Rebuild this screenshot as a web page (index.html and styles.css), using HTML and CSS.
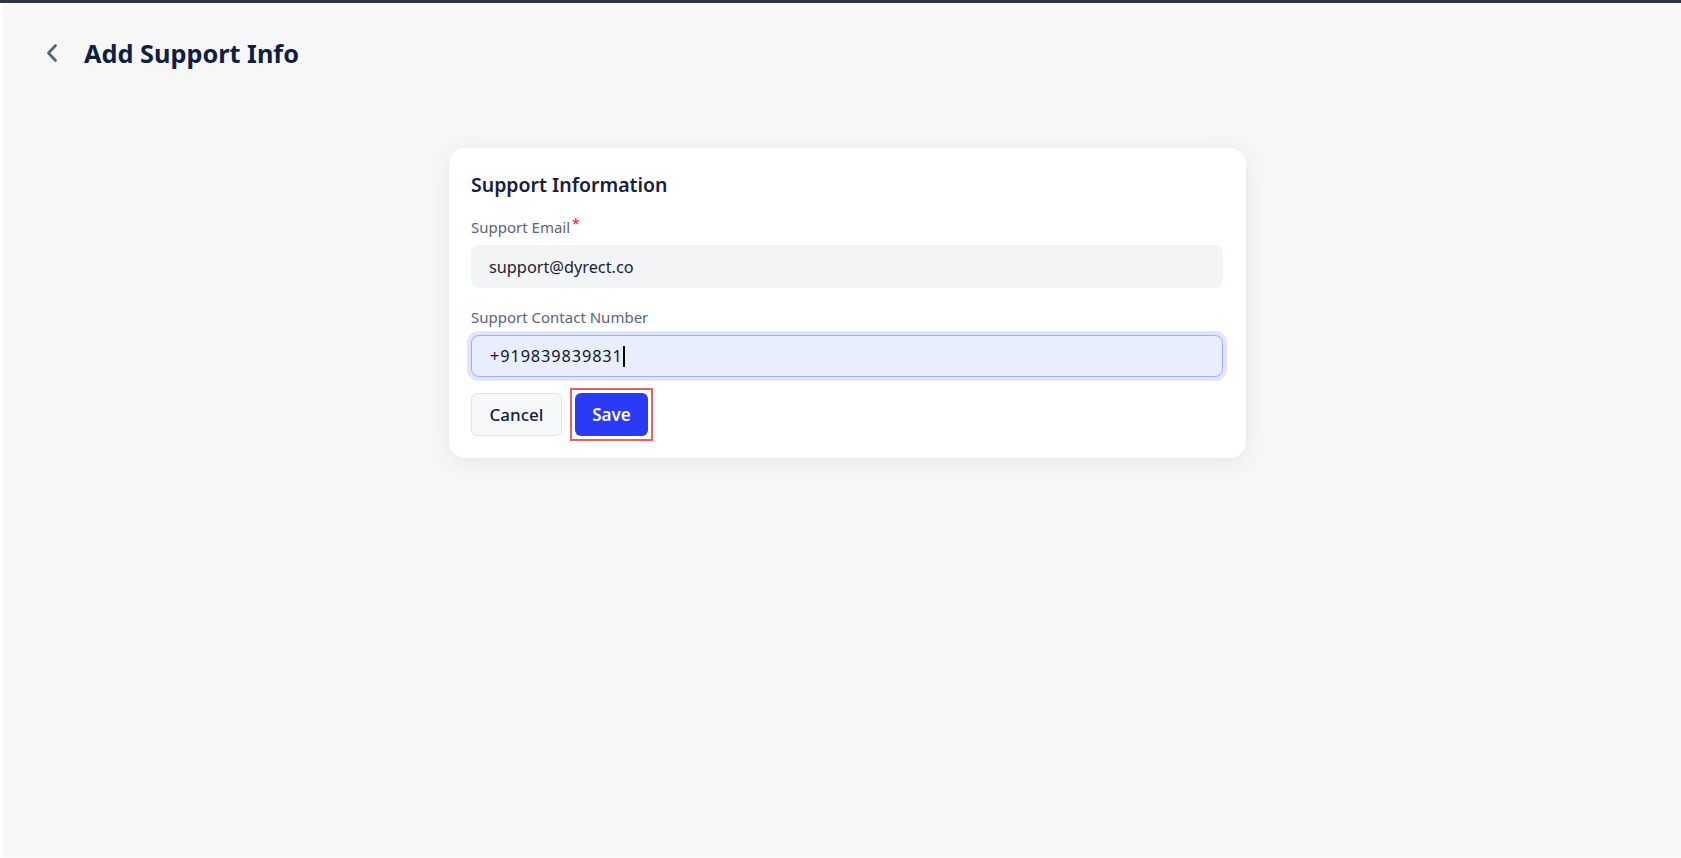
FILE: index.html
```html
<!DOCTYPE html>
<html lang="en">
<head>
<meta charset="utf-8">
<title>Add Support Info</title>
<link rel="stylesheet" href="styles.css">
</head>
<body>
<div class="topbar"></div>
<main class="page">
  <header class="page-header">
    <button class="back" type="button" aria-label="Back">
      <svg width="12" height="20" viewBox="0 0 12 20" fill="none"><path d="M9.5 2.5 L2.5 10 L9.5 17.5" stroke="#5b6579" stroke-width="2.8" stroke-linecap="round" stroke-linejoin="round"/></svg>
    </button>
    <h1 class="title">Add Support Info</h1>
  </header>
  <section class="card-wrap">
    <form class="card">
      <h2 class="card-title">Support Information</h2>
      <label class="label">Support Email<span class="req">*</span></label>
      <div class="input input-plain">support@dyrect.co</div>
      <label class="label label-2">Support Contact Number</label>
      <div class="input input-focus"><span class="phone">+919839839831</span><span class="caret"></span></div>
      <div class="actions">
        <button type="button" class="btn btn-cancel">Cancel</button>
        <button type="button" class="btn btn-save">Save</button>
      </div>
    </form>
  </section>
</main>
</body>
</html>
```

FILE: styles.css
```css
* { box-sizing: border-box; }
html, body { margin: 0; padding: 0; }
body {
  background: #ffffff;
  font-family: "Noto Sans", "Open Sans", sans-serif;
  width: 1681px;
  height: 858px;
  overflow: hidden;
}
.topbar {
  height: 3px;
  background: #2e3441;
}
.page {
  margin-left: 3px;
  height: 854px;
  background: #f7f7f7;
}
.page-header {
  display: flex;
  align-items: center;
  padding: 34px 0 0 39px;
  gap: 22px;
}
.back {
  border: 0;
  background: none;
  padding: 0;
  width: 20px;
  height: 24px;
  display: flex;
  align-items: center;
  justify-content: center;
}
.title {
  margin: 0;
  font-size: 25.3px;
  font-weight: 700;
  color: #0f1e44;
  line-height: 32px;
}
.card-wrap {
  padding-top: 79px;
  padding-left: 446px;
}
.card {
  width: 797px;
  background: #ffffff;
  border-radius: 16px;
  box-shadow: 0 4px 22px rgba(0, 0, 0, 0.07);
  padding: 24px 23px 22px 22px;
  display: flex;
  flex-direction: column;
}
.card-title {
  margin: 0;
  font-size: 19.5px;
  font-weight: 600;
  color: #16213b;
  line-height: 26px;
}
.label {
  margin-top: 19px;
  font-size: 15px;
  color: #5b6479;
  line-height: 20px;
  display: flex;
}
.label-2 { margin-top: 19px; }
.req {
  color: #f0202a;
  font-size: 14px;
  margin-left: 2px;
  line-height: 14px;
}
.input {
  margin-top: 8px;
  height: 43px;
  border-radius: 8px;
  padding: 0 18px;
  display: flex;
  align-items: center;
  font-size: 16.3px;
  color: #1b2436;
}
.input-plain {
  background: #f3f4f6;
}
.input-focus {
  margin-top: 8px;
  height: 42px;
  background: #e8eefc;
  border: 1px solid #a3aaf6;
  box-shadow: 0 0 0 4px #e2e4fd;
  padding-left: 18px;
  color: #111827;
}
.phone {
  letter-spacing: 0.9px;
}
.caret {
  display: inline-block;
  width: 2px;
  height: 21px;
  background: #000;
  margin-left: 0;
}
.actions {
  display: flex;
  gap: 13px;
  margin-top: 16px;
}
.btn {
  height: 43px;
  border-radius: 6px;
  font-family: inherit;
  font-size: 17px;
  font-weight: 600;
  padding: 0;
  cursor: pointer;
}
.btn-cancel {
  width: 91px;
  background: #f7f8f9;
  border: 1px solid #e1e4e8;
  color: #12203f;
  font-weight: 500;
}
.btn-save {
  position: relative;
  width: 73px;
  background: #2b3af6;
  border: 0;
  color: #ffffff;
}
.btn-save::after {
  content: "";
  position: absolute;
  inset: -5px;
  border: 2px solid #e8605f;
  pointer-events: none;
}
```
